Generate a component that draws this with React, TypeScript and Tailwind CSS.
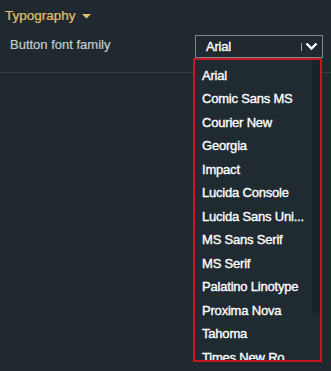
import React from "react";

const fonts = [
  "Arial",
  "Comic Sans MS",
  "Courier New",
  "Georgia",
  "Impact",
  "Lucida Console",
  "Lucida Sans Uni...",
  "MS Sans Serif",
  "MS Serif",
  "Palatino Linotype",
  "Proxima Nova",
  "Tahoma",
  "Times New Ro...",
];

export default function App() {
  return (
    <div
      className="relative w-[331px] h-[371px] overflow-hidden bg-[#1f292f]"
      style={{ fontFamily: '"Liberation Sans", Arial, sans-serif' }}
    >
      <div className="flex items-center pl-[5px] pt-[6px] h-[25px]">
        <span className="text-[13.5px] leading-[18px] text-[#e6c16c] [-webkit-text-stroke:0.2px_#e6c16c]">Typography</span>
        <svg width="9" height="5" viewBox="0 0 9 5" className="ml-[6px] mt-[1px]">
          <path d="M0 0 L9 0 L4.5 4.5 Z" fill="#e6c16c" />
        </svg>
      </div>
      <div className="flex items-start justify-between pl-[10px] pr-[8px] pt-[10px] h-[48px] border-b border-[#343f45]">
        <span className="text-[13px] leading-[16px] text-[#c5cdd2] mt-[2px] [-webkit-text-stroke:0.2px_#c5cdd2]">Button font family</span>
        <div className="flex items-center w-[128px] h-[23px] border border-[#7e878c] pl-[10px] pr-[4px]">
          <span className="flex-1 text-[13px] text-white leading-[16px] tracking-[-0.2px] [-webkit-text-stroke:0.35px_white]">Arial</span>
          <span className="w-px h-[8px] bg-[#9aa2a6] mr-[3px]" />
          <svg width="13" height="9" viewBox="0 0 13 9">
            <path d="M1.5 1.5 L6.5 6.5 L11.5 1.5" stroke="#ffffff" strokeWidth="2.4" fill="none" />
          </svg>
        </div>
      </div>
      <div className="absolute left-[193px] top-[58px] w-[129px] h-[304px] border-2 border-[#c8181c] bg-[#202b31] overflow-hidden">
        <div className="absolute right-0 top-0 w-[8px] h-[254px] rounded-b-[4px] bg-[#19232a]" />
        <div className="pt-[3.5px] pl-[7px] pr-[10px]">
          {fonts.map((f) => (
            <div
              key={f}
              className="h-[23.5px] flex items-center text-[13px] text-white whitespace-nowrap tracking-[-0.2px] [-webkit-text-stroke:0.35px_white]"
            >
              {f}
            </div>
          ))}
        </div>
      </div>
    </div>
  );
}
